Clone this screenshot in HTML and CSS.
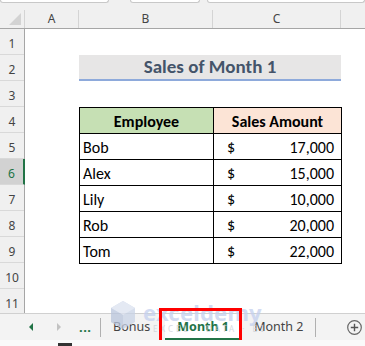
FILE: index.html
```html
<!DOCTYPE html>
<html lang="en">
<head>
    <meta charset="UTF-8">
    <title>Sales of Month 1</title>
    <link rel="stylesheet" href="styles.css">
</head>
<body>
<div class="topbar">
    <span class="box box1"></span>
    <span class="box box2"></span>
    <span class="box box3"></span>
</div>

<div class="colhead">
    <div class="corner"><span class="tri"></span></div>
    <div class="ch colA">A</div>
    <div class="ch colB">B</div>
    <div class="ch colC">C</div>
    <div class="ch colD"></div>
</div>

<div class="sheet">
    <ul class="rowhead">
        <li>1</li>
        <li>2</li>
        <li>3</li>
        <li>4</li>
        <li>5</li>
        <li class="sel">6</li>
        <li>7</li>
        <li>8</li>
        <li>9</li>
        <li>10</li>
        <li>11</li>
    </ul>
    <div class="cells">
        <div class="title">Sales of Month 1</div>
        <table class="sales">
            <tr>
                <th class="emp">Employee</th>
                <th class="amt">Sales Amount</th>
            </tr>
            <tr><td>Bob</td><td class="money"><span>$</span><span>17,000</span></td></tr>
            <tr><td>Alex</td><td class="money"><span>$</span><span>15,000</span></td></tr>
            <tr><td>Lily</td><td class="money"><span>$</span><span>10,000</span></td></tr>
            <tr><td>Rob</td><td class="money"><span>$</span><span>20,000</span></td></tr>
            <tr><td>Tom</td><td class="money"><span>$</span><span>22,000</span></td></tr>
        </table>
    </div>
</div>

<div class="tabbar">
    <div class="nav">
        <span class="arrow left"></span>
        <span class="arrow right"></span>
        <span class="more">...</span>
    </div>
    <span class="sep"></span>
    <span class="tab">Bonus</span>
    <span class="tab active">Month 1</span>
    <span class="tab">Month 2</span>
    <span class="sep"></span>
    <span class="add">
        <svg width="15" height="15" viewBox="0 0 15 15">
            <circle cx="7.5" cy="7.5" r="6.8" fill="none" stroke="#666" stroke-width="1.2"/>
            <path d="M7.5 3.8v7.4M3.8 7.5h7.4" stroke="#555" stroke-width="1.4"/>
        </svg>
    </span>
    <div class="mark">
        <svg class="logo" width="26" height="30" viewBox="0 0 26 30">
            <path d="M13 1 L25 8 L25 22 L13 29 L1 22 L1 8 Z" fill="#c9d3e6"/>
            <path d="M13 1 L25 8 L13 15 L1 8 Z" fill="#dbe2f0"/>
            <path d="M13 15 L13 29 L1 22 L1 8 Z" fill="#b9c5dc"/>
        </svg>
        <div class="marktext">
            <span class="brand">exceldemy</span>
            <span class="slogan">EXCEL · DATA · BI</span>
        </div>
    </div>
    <span class="redbox"></span>
</div>
<div class="strip"><span class="thumb"></span></div>
</body>
</html>
```

FILE: styles.css
```css
* {
    margin: 0;
    padding: 0;
    box-sizing: border-box;
}
ul, li {
    list-style: none;
}
body {
    width: 365px;
    height: 346px;
    overflow: hidden;
    background: #fff;
    font-family: "Noto Sans", "Open Sans", sans-serif;
}

/* formula bar leftovers */
.topbar {
    height: 10px;
    background: #f0f0f0;
    position: relative;
    display: flex;
}
.topbar .box {
    height: 3px;
    background: #fff;
    border: 1px solid #c8c8c8;
    border-top: none;
    border-radius: 0 0 4px 4px;
}
.box1 { width: 110px; margin-left: 0; }
.box2 { width: 71px; margin-left: 21px; }
.box3 { width: 160px; margin-left: 7px; }

/* column headers */
.colhead {
    height: 19px;
    display: flex;
    background: #f0f0f0;
    border-bottom: 1px solid #a6a6a6;
}
.corner {
    width: 25px;
    position: relative;
    border-right: 1px solid #d4d4d4;
}
.corner .tri {
    position: absolute;
    right: 3px;
    bottom: 3px;
    width: 0;
    height: 0;
    border-left: 12px solid transparent;
    border-bottom: 12px solid #d3d3d3;
}
.ch {
    font-size: 12px;
    line-height: 18px;
    color: #444;
    text-align: center;
    border-right: 1px solid #d4d4d4;
}
.colA { width: 54px; }
.colB { width: 134px; }
.colC { width: 128px; }
.colD { flex: 1; border-right: none; }

/* grid body */
.sheet {
    height: 284px;
    display: flex;
    overflow: hidden;
}
.rowhead {
    width: 25px;
    background: #f0f0f0;
    border-right: 1px solid #a6a6a6;
}
.rowhead li {
    height: 26px;
    line-height: 29px;
    font-size: 12px;
    color: #444;
    text-align: center;
    border-bottom: 1px solid #d9d9d9;
}
.rowhead .sel {
    background: #d2d2d2;
    color: #217346;
    border-right: 2px solid #217346;
    margin-right: -1px;
}
.cells {
    flex: 1;
    padding-left: 54px;
    padding-top: 26px;
    font-family: Carlito, Calibri, Lato, sans-serif;
}
.title {
    width: 262px;
    height: 26px;
    background: #e7e6e6;
    border-bottom: 2px solid #8eaadb;
    color: #44546a;
    font-weight: bold;
    font-size: 19px;
    line-height: 24px;
    text-align: center;
}
.sales {
    margin-top: 26px;
    width: 263px;
    border-collapse: collapse;
    font-size: 16px;
    color: #000;
}
.sales th, .sales td {
    height: 26px;
    border: 1px solid #000;
    padding: 2px 3px 0 3px;
    text-align: left;
}
.sales th {
    text-align: center;
    font-weight: bold;
}
.sales .emp {
    width: 134px;
    background: #c6e0b4;
}
.sales .amt {
    background: #fce4d6;
}
.sales .money span:first-child {
    float: left;
    padding-left: 10px;
}
.sales .money span:last-child {
    float: right;
    padding-right: 4px;
}

/* sheet tabs */
.tabbar {
    height: 27px;
    background: #f3f3f3;
    border-top: 1px solid #d0d0d0;
    display: flex;
    align-items: center;
    position: relative;
}
.nav {
    width: 100px;
    display: flex;
    align-items: center;
    padding-left: 29px;
}
.arrow {
    width: 0;
    height: 0;
    border-top: 4px solid transparent;
    border-bottom: 4px solid transparent;
}
.arrow.left {
    border-right: 4px solid #217346;
}
.arrow.right {
    margin-left: 24px;
    border-left: 4px solid #c2c2c2;
}
.more {
    margin-left: 18px;
    color: #217346;
    font-weight: bold;
    font-size: 13px;
    line-height: 10px;
    letter-spacing: 0.5px;
}
.sep {
    width: 1px;
    height: 19px;
    background: #b0b0b0;
}
.tab {
    font-size: 12.5px;
    color: #444;
    padding: 0 12px;
    line-height: 26px;
    height: 26px;
}
.tab.active {
    width: 76px;
    margin: 0 1px 0 3px;
    background: #fff;
    color: #217346;
    font-weight: bold;
    text-align: center;
    padding: 0;
    border-bottom: 2px solid #217346;
    line-height: 25px;
}
.add {
    margin-left: auto;
    margin-right: 3px;
    display: flex;
}
.redbox {
    position: absolute;
    left: 159px;
    top: -6px;
    width: 83px;
    height: 35px;
    border: 3px solid #ff0000;
}

/* watermark */
.mark {
    position: absolute;
    left: 110px;
    top: -14px;
    display: flex;
    align-items: flex-start;
    opacity: 0.75;
    pointer-events: none;
}
.marktext {
    display: flex;
    flex-direction: column;
    margin-left: 7px;
}
.brand {
    font-family: "Noto Sans", sans-serif;
    font-weight: bold;
    font-size: 22px;
    line-height: 24px;
    color: #c3cfee;
    letter-spacing: 0.2px;
}
.slogan {
    font-size: 8px;
    color: #c9cdd6;
    letter-spacing: 3px;
    margin-left: 10px;
    line-height: 10px;
}

.strip {
    height: 6px;
    background: #fafafa;
    position: relative;
}
.thumb {
    position: absolute;
    left: 58px;
    top: 3px;
    width: 14px;
    height: 3px;
    background: #333;
}
```
